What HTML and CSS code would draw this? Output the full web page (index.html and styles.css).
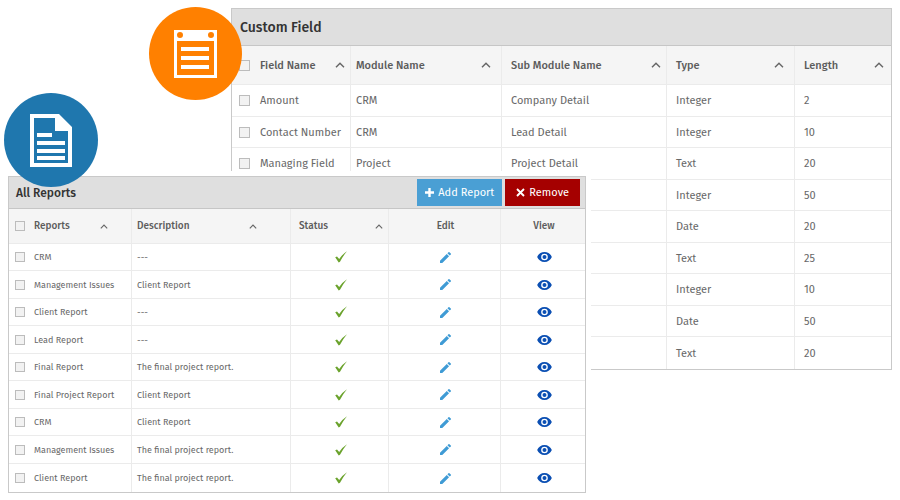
FILE: index.html
```html
<!DOCTYPE html>
<html lang="en">
<head>
<meta charset="utf-8">
<title>Reports</title>
<link rel="stylesheet" href="styles.css">
</head>
<body>
<svg class="defs" aria-hidden="true">
  <symbol id="caret" viewBox="0 0 10 6"><path d="M1 5.3 5 1.2 9 5.3" fill="none" stroke="#666" stroke-width="1.4"/></symbol>
  <symbol id="tick" viewBox="0 0 12 12"><path d="M.2 6.3 2 5.400 4.200 8Q7.500 3 12 .2 8.300 4.500 5 10.800L3.700 11.500Z" fill="#6ba32d"/></symbol>
  <symbol id="pencil" viewBox="3 3 18 18"><path d="M3 17.25V21h3.750L17.810 9.940l-3.750-3.750L3 17.250zM20.710 7.040a1 1 0 0 0 0-1.410l-2.340-2.340a1 1 0 0 0-1.410 0l-1.830 1.830 3.750 3.750 1.830-1.830z" fill="#3f9bd5"/></symbol>
  <symbol id="eye" viewBox="1 4.500 22 15"><path d="M12 4.500C7 4.500 2.730 7.610 1 12c1.730 4.390 6 7.500 11 7.500s9.270-3.110 11-7.500c-1.730-4.390-6-7.500-11-7.500zM12 17a5 5 0 1 1 0-10 5 5 0 0 1 0 10zm0-8a3 3 0 1 0 0 6 3 3 0 0 0 0-6z" fill="#0b4fb3"/></symbol>
</svg>
<main class="scene">
  <section class="panel fields">
    <span class="badge badge-orange"><svg viewBox="0 0 43 48"><path fill="#fff" fill-rule="evenodd" d="M0 0h43v48H0zM3 11v34h37V11zM6 2a3 3 0 1 0 0 6 3 3 0 0 0 0-6zM37 2a3 3 0 1 0 0 6 3 3 0 0 0 0-6z"/><path fill="#fff" d="M7 17h28v4H7zM7 26h28v4H7zM7 35h28v4H7z"/></svg></span>
    <header class="bar"><h2>Custom Field</h2></header>
    <table>
      <colgroup><col class="f-name"><col class="f-module"><col class="f-sub"><col class="f-type"><col class="f-length"></colgroup>
      <thead><tr>
        <th><div class="head"><label class="pick"><input type="checkbox"><span>Field Name</span></label><button class="sort" aria-label="Sort"><svg><use href="#caret"/></svg></button></div></th>
        <th><div class="head">Module Name<button class="sort" aria-label="Sort"><svg><use href="#caret"/></svg></button></div></th>
        <th><div class="head">Sub Module Name<button class="sort" aria-label="Sort"><svg><use href="#caret"/></svg></button></div></th>
        <th><div class="head">Type<button class="sort" aria-label="Sort"><svg><use href="#caret"/></svg></button></div></th>
        <th><div class="head">Length<button class="sort" aria-label="Sort"><svg><use href="#caret"/></svg></button></div></th>
      </tr></thead>
      <tbody>
        <tr><td><label class="pick"><input type="checkbox"><span>Amount</span></label></td><td>CRM</td><td>Company Detail</td><td>Integer</td><td>2</td></tr>
        <tr><td><label class="pick"><input type="checkbox"><span>Contact Number</span></label></td><td>CRM</td><td>Lead Detail</td><td>Integer</td><td>10</td></tr>
        <tr><td><label class="pick"><input type="checkbox"><span>Managing Field</span></label></td><td>Project</td><td>Project Detail</td><td>Text</td><td>20</td></tr>
        <tr><td></td><td></td><td></td><td>Integer</td><td>50</td></tr>
        <tr><td></td><td></td><td></td><td>Date</td><td>20</td></tr>
        <tr><td></td><td></td><td></td><td>Text</td><td>25</td></tr>
        <tr><td></td><td></td><td></td><td>Integer</td><td>10</td></tr>
        <tr><td></td><td></td><td></td><td>Date</td><td>50</td></tr>
        <tr><td></td><td></td><td></td><td>Text</td><td>20</td></tr>
      </tbody>
    </table>
  </section>

  <section class="panel reports">
    <span class="badge badge-blue"><svg viewBox="0 0 42 53"><path fill="#fff" fill-rule="evenodd" d="M0 0h29l13 13v40H0zM4 4v45h34V17H25V4z"/><path fill="#fff" d="M7 19h15v4H7zM7 27h28v4H7zM7 35h28v4H7zM7 42h28v4H7z"/></svg></span>
    <header class="bar">
      <h2>All Reports</h2>
      <button class="btn btn-add"><svg viewBox="0 0 9 9"><path d="M4.500 0v9M0 4.500h9" stroke="#fff" stroke-width="2.400"/></svg>Add Report</button>
      <button class="btn btn-remove"><svg viewBox="0 0 9 9"><path d="M1 1l7 7M8 1l-7 7" stroke="#fff" stroke-width="1.900"/></svg>Remove</button>
    </header>
    <table>
      <colgroup><col class="r-name"><col class="r-desc"><col class="r-status"><col class="r-edit"><col class="r-view"></colgroup>
      <thead><tr>
        <th><div class="head"><label class="pick"><input type="checkbox"><span>Reports</span></label><button class="sort" aria-label="Sort"><svg><use href="#caret"/></svg></button></div></th>
        <th><div class="head">Description<button class="sort" aria-label="Sort"><svg><use href="#caret"/></svg></button></div></th>
        <th><div class="head">Status<button class="sort" aria-label="Sort"><svg><use href="#caret"/></svg></button></div></th>
        <th>Edit</th>
        <th>View</th>
      </tr></thead>
      <tbody>
        <tr><td><label class="pick"><input type="checkbox"><span>CRM</span></label></td><td>---</td><td><svg class="tick"><use href="#tick"/></svg></td><td><button class="icon" aria-label="Edit"><svg class="pencil"><use href="#pencil"/></svg></button></td><td><button class="icon" aria-label="View"><svg class="eye"><use href="#eye"/></svg></button></td></tr>
        <tr><td><label class="pick"><input type="checkbox"><span>Management Issues</span></label></td><td>Client Report</td><td><svg class="tick"><use href="#tick"/></svg></td><td><button class="icon" aria-label="Edit"><svg class="pencil"><use href="#pencil"/></svg></button></td><td><button class="icon" aria-label="View"><svg class="eye"><use href="#eye"/></svg></button></td></tr>
        <tr><td><label class="pick"><input type="checkbox"><span>Client Report</span></label></td><td>---</td><td><svg class="tick"><use href="#tick"/></svg></td><td><button class="icon" aria-label="Edit"><svg class="pencil"><use href="#pencil"/></svg></button></td><td><button class="icon" aria-label="View"><svg class="eye"><use href="#eye"/></svg></button></td></tr>
        <tr><td><label class="pick"><input type="checkbox"><span>Lead Report</span></label></td><td>---</td><td><svg class="tick"><use href="#tick"/></svg></td><td><button class="icon" aria-label="Edit"><svg class="pencil"><use href="#pencil"/></svg></button></td><td><button class="icon" aria-label="View"><svg class="eye"><use href="#eye"/></svg></button></td></tr>
        <tr><td><label class="pick"><input type="checkbox"><span>Final Report</span></label></td><td>The final project report.</td><td><svg class="tick"><use href="#tick"/></svg></td><td><button class="icon" aria-label="Edit"><svg class="pencil"><use href="#pencil"/></svg></button></td><td><button class="icon" aria-label="View"><svg class="eye"><use href="#eye"/></svg></button></td></tr>
        <tr><td><label class="pick"><input type="checkbox"><span>Final Project Report</span></label></td><td>Client Report</td><td><svg class="tick"><use href="#tick"/></svg></td><td><button class="icon" aria-label="Edit"><svg class="pencil"><use href="#pencil"/></svg></button></td><td><button class="icon" aria-label="View"><svg class="eye"><use href="#eye"/></svg></button></td></tr>
        <tr><td><label class="pick"><input type="checkbox"><span>CRM</span></label></td><td>Client Report</td><td><svg class="tick"><use href="#tick"/></svg></td><td><button class="icon" aria-label="Edit"><svg class="pencil"><use href="#pencil"/></svg></button></td><td><button class="icon" aria-label="View"><svg class="eye"><use href="#eye"/></svg></button></td></tr>
        <tr><td><label class="pick"><input type="checkbox"><span>Management Issues</span></label></td><td>The final project report.</td><td><svg class="tick"><use href="#tick"/></svg></td><td><button class="icon" aria-label="Edit"><svg class="pencil"><use href="#pencil"/></svg></button></td><td><button class="icon" aria-label="View"><svg class="eye"><use href="#eye"/></svg></button></td></tr>
        <tr><td><label class="pick"><input type="checkbox"><span>Client Report</span></label></td><td>The final project report.</td><td><svg class="tick"><use href="#tick"/></svg></td><td><button class="icon" aria-label="Edit"><svg class="pencil"><use href="#pencil"/></svg></button></td><td><button class="icon" aria-label="View"><svg class="eye"><use href="#eye"/></svg></button></td></tr>
      </tbody>
    </table>
  </section>
</main>
</body>
</html>
```
FILE: styles.css
```css
* { box-sizing: border-box; }

body {
  margin: 0;
  background: #fff;
  color: #686868;
  font-family: "Fira Sans", "Noto Sans", sans-serif;
}

.defs { position: absolute; width: 0; height: 0; }
svg { display: block; }

/* The two panels share one grid row and overlap in the middle column. */
.scene {
  display: grid;
  grid-template-columns: 8px 223fr 355fr 306fr 8px;
  align-items: start;
}

.panel {
  position: relative;
  border: 1px solid #c9c9c9;
  background: #fff;
}

.fields { grid-area: 1 / 3 / 2 / 5; margin-top: 8px; font-size: 11px; }

.reports {
  grid-area: 1 / 2 / 2 / 4;
  margin-top: 176px;
  box-shadow: 0 0 0 5px #fff;
  font-size: 9px;
}

.bar {
  display: flex;
  align-items: center;
  gap: 3px;
  background: #dfdfdf;
  border-bottom: 1px solid #c6c6c6;
}
.fields .bar { height: 37px; padding: 0 8px; }
.reports .bar { height: 32px; padding: 0 5px 0 7px; }

h2 { margin: 0 auto 0 0; color: #333; font-weight: 500; }
.fields h2 { font-size: 14px; }
.reports h2 { font-size: 12px; }

button { margin: 0; padding: 0; border: 0; background: none; font: inherit; }

.btn {
  display: flex;
  align-items: center;
  justify-content: center;
  gap: 4px;
  height: 27px;
  color: #fff;
  font-size: 11px;
}
.btn svg { width: 9px; height: 9px; }
.btn-add { background: #4a9fd4; padding: 0 8px; }
.btn-remove { background: #a50000; padding: 0 11px; }

table { width: 100%; table-layout: fixed; border-collapse: separate; border-spacing: 0; }

.f-name { width: 119px; }
.f-module { width: 151px; }
.f-sub { width: 165px; }
.f-type { width: 128px; }
.f-length { width: 96px; }
.r-name { width: 123px; }
.r-desc { width: 159px; }
.r-status { width: 98px; }
.r-edit { width: 112px; }
.r-view { width: 84px; }

th, td {
  padding: 0 5px;
  border: solid #ebebeb;
  border-width: 0 1px 1px 0;
  text-align: left;
  font-weight: 400;
  white-space: nowrap;
}
th { background: #f5f5f5; color: #5c5c5c; font-weight: 500; }
th:last-child, td:last-child { border-right: 0; }
tbody tr:last-child td { border-bottom: 0; }

.fields th { height: 39px; }
.fields tr:nth-child(odd) td { height: 32px; }
.fields tr:nth-child(even) td { height: 31px; }
.reports th { height: 35px; font-size: 10px; }
.reports tr:nth-child(odd) td { height: 27px; }
.reports tr:nth-child(even) td { height: 28px; }
.reports tbody tr:last-child td { height: 28px; }

.fields tr > :nth-child(1) { padding-left: 7px; }
.fields tr > :nth-child(n+3) { padding-left: 9px; }
.fields th:nth-child(even) { padding-right: 10px; }
.fields th:last-child { padding-right: 7px; }
.reports tr > :nth-child(1) { padding-left: 6px; }
.reports tr > :nth-child(3) { padding-left: 8px; }
.reports th:nth-child(1) { padding-right: 23px; }
.reports th:nth-child(2) { padding-right: 33px; }
.reports tr > :nth-child(n+4) { padding: 0 0 0 2px; text-align: center; }

.head { display: flex; align-items: center; justify-content: space-between; }
.pick { display: flex; align-items: center; gap: 10px; }
.reports .pick { gap: 9px; }

input {
  appearance: none;
  flex: none;
  width: 11px;
  height: 11px;
  margin: 0;
  border: 1px solid #bcbcbc;
  background: #f2f2f2;
}
.reports input { width: 10px; height: 10px; }

.sort svg { width: 10px; height: 6px; }
.reports .sort svg { width: 8px; height: 5px; }

.tick { width: 12px; height: 12px; margin: 0 auto; }
.icon { display: block; margin: 0 auto; }
.pencil { width: 11px; height: 11px; }
.eye { width: 15px; height: 10px; }

.badge {
  position: absolute;
  z-index: 1;
  display: grid;
  place-items: center;
  border-radius: 50%;
}
.badge-orange { left: -83px; top: -2px; width: 93px; height: 93px; background: #ff8000; }
.badge-orange svg { width: 43px; height: 48px; }
.badge-blue { left: -5px; top: -84px; width: 94px; height: 94px; background: #1f77ae; }
.badge-blue svg { width: 42px; height: 53px; }
```
